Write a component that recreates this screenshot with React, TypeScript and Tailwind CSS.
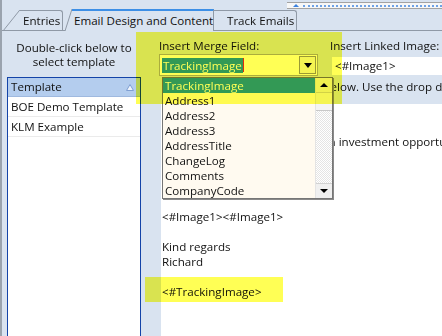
import React from "react"

const fields = [
  "TrackingImage",
  "Address1",
  "Address2",
  "Address3",
  "AddressTitle",
  "ChangeLog",
  "Comments",
  "CompanyCode",
]

function Slant({ h }: { h: number }) {
  return (
    <svg className="absolute top-[-1px]" style={{ left: -(h * 0.8) }} width={h * 0.8} height={h} viewBox={`0 0 ${h * 0.8} ${h}`}>
      <line x1="0" y1={h} x2={h * 0.8} y2="0" stroke="#8f99a6" strokeWidth="1" />
    </svg>
  )
}

export default function App() {
  return (
    <div className="relative w-[442px] h-[336px] overflow-hidden bg-[#d9e3f0] border-l-2 border-[#9aa3ae] text-[11.6px] text-[#111] font-['Open_Sans','Noto_Sans',sans-serif]">
      {/* tab strip */}
      <div className="relative h-[31px] border-b border-[#8f99a6]">
        <div className="absolute left-[285px] right-0 top-[2px] h-[7px] border-y border-[#a3a3a3] bg-[#f7f7f7] flex items-center">
          <div className="ml-[6px] w-0 h-0 border-x-[3px] border-x-transparent border-b-[3px] border-b-[#3b82e0]" />
          <div className="ml-[4px] flex-1 border-t-2 border-dotted border-[#6ea2e6]" />
        </div>
        <div className="flex items-end h-full pl-[18px]">
          <div className="relative shrink-0 h-[20px] w-[43px] border-t border-r border-[#8f99a6] rounded-tr-[3px] pl-[3px] leading-[20px] whitespace-nowrap">
            <Slant h={21} />
            Entries
          </div>
          <div className="relative shrink-0 z-10 ml-[9px] -mb-px h-[22px] w-[142px] border-t-2 border-t-[#3d8fe6] border-r border-r-[#8f99a6] bg-[#d9e3f0] pl-[2px] leading-[20px] whitespace-nowrap">
            <svg className="absolute top-[-2px] left-[-7px]" width="7" height="22" viewBox="0 0 7 22">
              <path d="M0 22 L7 0 L7 22 Z" fill="#d9e3f0" />
              <line x1="0" y1="22" x2="7" y2="0" stroke="#8f99a6" strokeWidth="1" />
            </svg>
            Email Design and Content
          </div>
          <div className="shrink-0 h-[20px] w-[83px] border-t border-r border-[#8f99a6] rounded-tr-[3px] pl-[13px] leading-[20px] whitespace-nowrap">
            Track Emails
          </div>
        </div>
      </div>

      {/* body */}
      <div className="flex h-[305px]">
        <div className="w-[139px] shrink-0 flex flex-col pl-[5px]">
          <div className="h-[46px] pt-[10px] leading-[14px] text-center">
            Double-click below to
            <br />
            select template
          </div>
          <div className="flex-1 border border-b-0 border-[#1444a8] bg-white">
            <div className="h-[19px] bg-[#b4cdee] border-b border-[#9fb9df] flex items-center justify-between pl-[3px] pr-[6px]">
              <span>Template</span>
              <svg width="8" height="7" viewBox="0 0 8 7">
                <path d="M4 0.5 L7.5 6.5 L0.5 6.5 Z" fill="#eef4fc" stroke="#7f9fd2" strokeWidth="1" />
              </svg>
            </div>
            <div className="h-[20px] leading-[20px] pl-[3px] border-b border-[#ebebeb]">BOE Demo Template</div>
            <div className="h-[20px] leading-[20px] pl-[3px] border-b border-[#ebebeb]">KLM Example</div>
          </div>
        </div>

        <div className="flex-1 min-w-0 flex flex-col">
          <div className="h-[47px] flex">
            <div className="ml-[18px] w-[159px] shrink-0">
              <div className="pt-[8px] leading-[14px]">Insert Merge Field:</div>
              <div className="mt-[1px] h-[22px] border border-[#abadb3] bg-white flex items-center pl-[2px] pr-[1px]">
                <div className="flex-1 flex items-center">
                  <span className="bg-[#3399ff] text-white leading-[15px] px-[1px]">TrackingImage</span>
                  <span className="w-px h-[14px] bg-[#e03020]" />
                </div>
                <div className="w-[17px] h-[18px] border border-[#9a9a9a] bg-[#f4f4f4] flex items-center justify-center">
                  <div className="w-0 h-0 border-x-[4px] border-x-transparent border-t-[5px] border-t-black" />
                </div>
              </div>
            </div>
            <div className="ml-[12px] flex-1 min-w-0 whitespace-nowrap">
              <div className="pt-[8px] leading-[14px]">Insert Linked Image:</div>
              <div className="mt-[4px] ml-[2px] h-[18px] bg-white pl-[3px] leading-[18px]">&lt;#Image1&gt;</div>
            </div>
          </div>
          <div className="h-[26px] pt-[1px] pl-[21px] leading-[15px] whitespace-nowrap overflow-hidden">
            <span className="tracking-[-0.25px]">Please type your email content </span>below. Use the drop down lists to insert fields.
          </div>
          <div className="flex-1 ml-[20px] bg-white pl-[1px] leading-[15px] whitespace-nowrap overflow-hidden">
            <div>Dear &lt;#FirstName&gt;,</div>
            <div>&nbsp;</div>
            <div className="pl-[5px]">I would like to tell you about an investment opportunity that</div>
            <div>&nbsp;</div>
            <div>&nbsp;</div>
            <div>&nbsp;</div>
            <div>&nbsp;</div>
            <div>&lt;#Image1&gt;&lt;#Image1&gt;</div>
            <div>&nbsp;</div>
            <div>Kind regards</div>
            <div>Richard</div>
            <div>&nbsp;</div>
            <div>&lt;#TrackingImage&gt;</div>
          </div>
        </div>
      </div>

      {/* open drop-down list */}
      <div className="absolute left-[160px] top-[77px] w-[171px] h-[122px] border border-[#767676] bg-[#fffaf0] shadow-[1px_1px_0_#8a8a8a] flex">
        <div className="flex-1">
          {fields.map((f, i) => (
            <div
              key={f}
              className={
                i === 0
                  ? "h-[15px] leading-[15px] pl-[2px] bg-[#3399ff] text-white"
                  : "h-[15px] leading-[15px] pl-[2px]"
              }
            >
              {f}
            </div>
          ))}
        </div>
        <div className="w-[17px] flex flex-col border-l border-[#e4e4e4]">
          <div className="h-[15px] bg-[#f0f0f0] border-b border-[#d2d2d2] flex items-center justify-center">
            <div className="w-0 h-0 border-x-[4px] border-x-transparent border-b-[4px] border-b-black" />
          </div>
          <div className="h-[18px] bg-[#f4f4f4] border-b border-[#c8c8c8]" />
          <div className="flex-1 bg-[conic-gradient(#e4e4e4_25%,#ffffff_0_50%,#e4e4e4_0_75%,#ffffff_0)] bg-[length:2px_2px]" />
          <div className="h-[15px] bg-[#f0f0f0] border-t border-[#d2d2d2] flex items-center justify-center">
            <div className="w-0 h-0 border-x-[4px] border-x-transparent border-t-[4px] border-t-black" />
          </div>
        </div>
      </div>

      {/* highlighter marks */}
      <div className="absolute left-[134px] top-[32px] w-[206px] h-[72px] bg-[#ffff55] mix-blend-multiply pointer-events-none" />
      <div className="absolute left-[143px] top-[277px] w-[138px] h-[25px] bg-[#ffff55] mix-blend-multiply pointer-events-none" />
    </div>
  )
}
